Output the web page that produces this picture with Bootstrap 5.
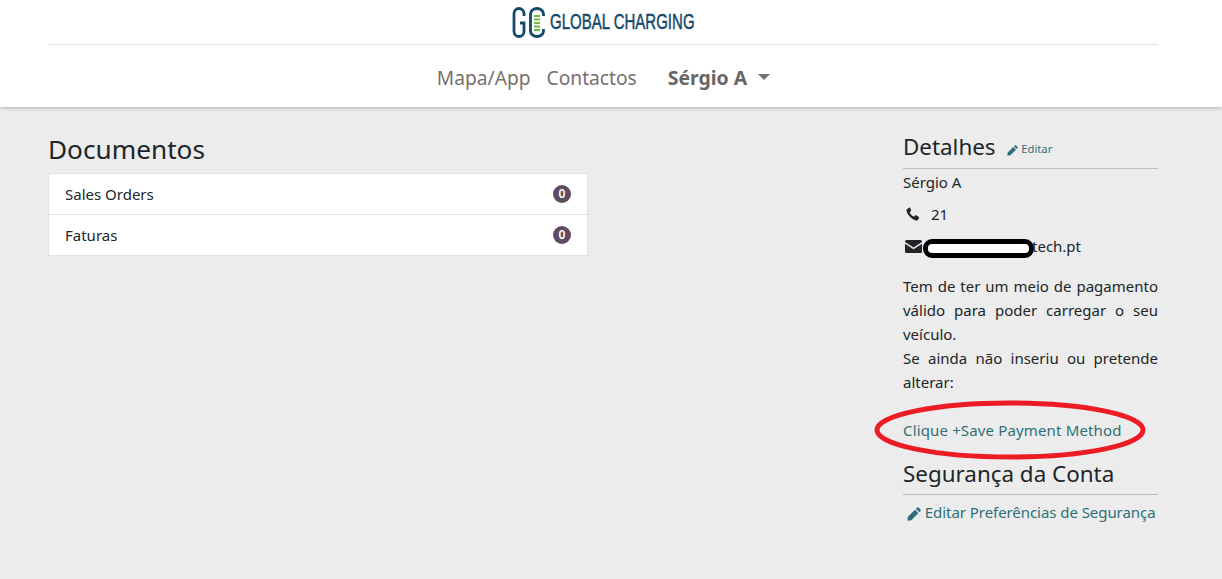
<!DOCTYPE html>
<html lang="pt">
<head>
    <meta charset="UTF-8">
    <meta name="viewport" content="width=device-width, initial-scale=1.0">
    <title>Documentos - Global Charging</title>
    <link href="https://cdn.jsdelivr.net/npm/bootstrap@5.3.0/dist/css/bootstrap.min.css" rel="stylesheet">
    <style>
        html, body { height: 100%; overflow: hidden; }
        body { background: #ececec; color: #212529; font-family: "Noto Sans", "Open Sans", sans-serif; font-size: 15px; line-height: 24px; }
        a { color: #2f7078; text-decoration: none; }
        .page-head { background: #fff; height: 107px; box-shadow: 0 1px 4px rgba(0,0,0,.25); }
        .page-wrap { width: 1110px; margin-left: 48px; }
        .brand-row { height: 45px; border-bottom: 1px solid #dee2e6; }
        .brand-name { font-family: "Liberation Sans", sans-serif; font-size: 22.5px; color: #12496b; line-height: 30px; display: inline-block; width: 144px; white-space: nowrap; transform: scaleX(.667); transform-origin: left center; -webkit-text-stroke: .5px #12496b; }
        .menu-row { height: 62px; font-size: 19.2px; padding: 4px 0 0 1px; }
        .menu-row a { color: #77716d; }
        .menu-user { color: #6a6562 !important; font-weight: 700; font-size: 19.4px; margin-left: 15px; }
        .menu-caret { display: inline-block; border-top: 6px solid #77716d; border-left: 6px solid transparent; border-right: 6px solid transparent; margin-left: 11px; vertical-align: 5px; }
        .docs-col { width: 540px; padding-top: 24px; }
        .docs-title { font-size: 26.2px; line-height: 36px; margin: 0 0 6px; font-weight: 400; }
        .docs-list .list-group-item { height: 42px; padding: 8px 16px; border-color: #dee2e6; display: flex; justify-content: space-between; align-items: center; border-radius: 0; }
        .docs-list .list-group-item + .list-group-item { height: 41px; }
        .count-pill { background: #5f4b5f; color: #fff; width: 18px; height: 18px; border-radius: 50%; font-size: 12px; font-weight: 600; display: flex; align-items: center; justify-content: center; }
        .side-col { width: 255px; padding-top: 23px; }
        .side-head { font-size: 22.4px; line-height: 34px; font-weight: 400; margin: 0; padding-bottom: 2px; border-bottom: 1px solid #bcbcbc; }
        .side-edit { font-size: 11.2px; margin-left: 6px; vertical-align: 2px; }
        .side-first { margin-top: 1px; }
        .side-line { height: 32px; display: flex; align-items: center; }
        .side-phone { margin-top: 4px; }
        .side-phone svg { margin-left: 3px; }
        .side-phone span { margin-left: 7px; }
        .side-mail { margin-top: 0; }
        .side-mail svg { margin-left: 2px; }
        .side-note { text-align: justify; margin: 12px 0 0; }
        .pay-link { display: block; margin-top: 24px; position: relative; letter-spacing: .15px; }
        .pay-ring { position: absolute; left: -29px; top: -18px; }
        .security-head { margin-top: 15px; padding-bottom: 3px; }
        .edit-security { margin-top: 5px; letter-spacing: -.06px; }
        .edit-security svg { margin-left: 4px; }
        .mask-ring { width: 111px; height: 19px; background: #fff; border: 5px solid #000; border-radius: 9px; margin: 5px -2px 0 1px; }
    </style>
</head>
<body>
    <header class="page-head">
        <div class="page-wrap">
            <div class="brand-row d-flex justify-content-center align-items-center">
                <svg width="34" height="31" viewBox="0 0 34 31" fill="none" class="me-1">
                    <path d="M12 9V6.500a5 5 0 0 0-10 0v18a5 5 0 0 0 10 0V16H8" stroke="#12496b" stroke-width="2.800"/>
                    <path d="M31.500 9V7a6.500 5.500 0 0 0-13 0v17a6.500 5.500 0 0 0 13 0v-2" stroke="#12496b" stroke-width="2.800"/>
                    <path d="M22 9h6M22 12.500h6M22 16h6M22 19.500h6M22 23h6" stroke="#6dbb45" stroke-width="2"/>
                </svg>
                <span class="brand-name">GLOBAL CHARGING</span>
            </div>
            <nav class="menu-row d-flex justify-content-center align-items-center gap-3">
                <a href="#">Mapa/App</a>
                <a href="#">Contactos</a>
                <a href="#" class="menu-user">Sérgio A<span class="menu-caret"></span></a>
            </nav>
        </div>
    </header>

    <main class="page-wrap d-flex justify-content-between">
        <section class="docs-col">
            <h1 class="docs-title">Documentos</h1>
            <div class="list-group docs-list rounded-0">
                <div class="list-group-item">Sales Orders <span class="count-pill">0</span></div>
                <div class="list-group-item">Faturas <span class="count-pill">0</span></div>
            </div>
        </section>
        <aside class="side-col">
            <h3 class="side-head">Detalhes <a href="#" class="side-edit">
                <svg width="11" height="11" viewBox="0 0 16 16" fill="currentColor"><path d="M13.200.6l2.200 2.200a1.200 1.200 0 0 1 0 1.700L14 5.900 10.100 2 11.500.6a1.200 1.200 0 0 1 1.700 0zM9.100 3l3.900 3.900L5 15l-4.500.7L1 11z"/></svg>
                Editar</a></h3>
            <div class="side-first">Sérgio A</div>
            <div class="side-line side-phone">
                <svg width="14" height="14" viewBox="0 0 16 16" fill="#212529"><path d="M3.600.8 1.300 2.200C.5 2.700.3 3.700.6 4.700c1.500 5 5.500 9.200 10.500 10.800 1 .3 2 0 2.500-.8l1.300-2.100c.3-.5.100-1-.3-1.300l-3-1.800c-.4-.3-1-.2-1.300.2l-1.100 1.300c-2.300-1-4.100-2.800-5-5.100l1.300-1.100c.4-.3.5-.9.200-1.300L4.900 1.100C4.600.7 4 .5 3.600.8z"/></svg>
                <span>&nbsp;21</span>
            </div>
            <div class="side-line side-mail">
                <svg width="17" height="13" viewBox="0 0 17 13" fill="#212529"><path d="M1.500 0h14A1.500 1.500 0 0 1 17 1.500v.6L8.500 7.500 0 2.100v-.6A1.500 1.500 0 0 1 1.500 0zM0 3.800l8.500 5.400L17 3.800v7.700a1.500 1.500 0 0 1-1.500 1.500h-14A1.500 1.500 0 0 1 0 11.500z"/></svg>
                <span class="mask-ring"></span><span>tech.pt</span>
            </div>
            <p class="side-note">Tem de ter um meio de pagamento válido para poder carregar o seu veículo.<br>Se ainda não inseriu ou pretende alterar:</p>
            <a href="#" class="pay-link">Clique +Save Payment Method
                <svg class="pay-ring" width="272" height="60" viewBox="0 0 272 60" fill="none"><ellipse cx="136" cy="30" rx="133" ry="27" stroke="#ed1c24" stroke-width="5"/></svg>
            </a>
            <h3 class="side-head security-head">Segurança da Conta</h3>
            <a href="#" class="d-block edit-security">
                <svg width="14" height="14" viewBox="0 0 16 16" fill="currentColor"><path d="M13.200.6l2.200 2.200a1.200 1.200 0 0 1 0 1.700L14 5.900 10.100 2 11.500.6a1.200 1.200 0 0 1 1.700 0zM9.100 3l3.900 3.900L5 15l-4.500.7L1 11z"/></svg>
                Editar Preferências de Segurança</a>
        </aside>
    </main>

    <script src="https://cdn.jsdelivr.net/npm/bootstrap@5.3.0/dist/js/bootstrap.bundle.min.js"></script>
</body>
</html>
